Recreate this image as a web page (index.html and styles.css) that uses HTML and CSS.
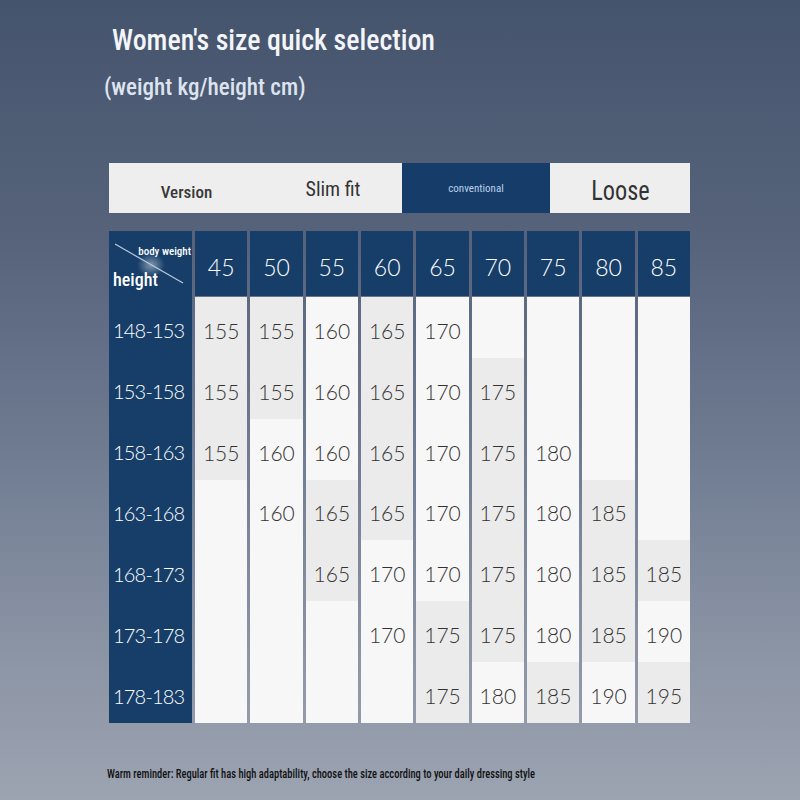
FILE: index.html
```html
<!DOCTYPE html>
<html lang="en">
<head>
<meta charset="utf-8">
<title>Women's size quick selection</title>
<link rel="stylesheet" href="styles.css">
</head>
<body>
<div class="page">
  <h1 class="title">Women's size quick selection</h1>
  <p class="subtitle">(weight kg/height cm)</p>

  <div class="version">
    <div class="v-cell v-label">Version</div>
    <div class="v-cell v-slim">Slim fit</div>
    <div class="v-cell v-conv">conventional</div>
    <div class="v-cell v-loose"><span class="loose-text">Loose</span></div>
  </div>

  <div class="chart">
    <div class="corner">
      <svg class="corner-art" width="83" height="66" viewBox="0 0 83 66">
        <defs>
          <radialGradient id="glare" cx="0.5" cy="0.5" r="0.5">
            <stop offset="0" stop-color="#ffffff" stop-opacity="0.45"/>
            <stop offset="1" stop-color="#ffffff" stop-opacity="0"/>
          </radialGradient>
        </defs>
        <ellipse cx="42" cy="34" rx="14" ry="12" fill="url(#glare)"/>
        <line x1="6" y1="13" x2="74" y2="52" stroke="#b9c9de" stroke-width="1.2"/>
      </svg>
      <span class="corner-top">body weight</span>
      <span class="corner-bottom">height</span>
    </div>
    <div class="head">45</div><div class="head">50</div><div class="head">55</div><div class="head">60</div><div class="head">65</div><div class="head">70</div><div class="head">75</div><div class="head">80</div><div class="head">85</div>

    <div class="label">148-153</div>
    <div class="cell alt">155</div><div class="cell alt">155</div><div class="cell">160</div><div class="cell alt">165</div><div class="cell">170</div><div class="cell"></div><div class="cell"></div><div class="cell"></div><div class="cell"></div>

    <div class="label">153-158</div>
    <div class="cell alt">155</div><div class="cell alt">155</div><div class="cell">160</div><div class="cell alt">165</div><div class="cell">170</div><div class="cell alt">175</div><div class="cell"></div><div class="cell"></div><div class="cell"></div>

    <div class="label">158-163</div>
    <div class="cell alt">155</div><div class="cell">160</div><div class="cell">160</div><div class="cell alt">165</div><div class="cell">170</div><div class="cell alt">175</div><div class="cell">180</div><div class="cell"></div><div class="cell"></div>

    <div class="label">163-168</div>
    <div class="cell"></div><div class="cell">160</div><div class="cell alt">165</div><div class="cell alt">165</div><div class="cell">170</div><div class="cell alt">175</div><div class="cell">180</div><div class="cell alt">185</div><div class="cell"></div>

    <div class="label">168-173</div>
    <div class="cell"></div><div class="cell"></div><div class="cell alt">165</div><div class="cell">170</div><div class="cell">170</div><div class="cell alt">175</div><div class="cell">180</div><div class="cell alt">185</div><div class="cell alt">185</div>

    <div class="label">173-178</div>
    <div class="cell"></div><div class="cell"></div><div class="cell"></div><div class="cell">170</div><div class="cell alt">175</div><div class="cell alt">175</div><div class="cell">180</div><div class="cell alt">185</div><div class="cell">190</div>

    <div class="label">178-183</div>
    <div class="cell"></div><div class="cell"></div><div class="cell"></div><div class="cell"></div><div class="cell alt">175</div><div class="cell">180</div><div class="cell alt">185</div><div class="cell">190</div><div class="cell alt">195</div>
  </div>

  <p class="note">Warm reminder: Regular fit has high adaptability, choose the size according to your daily dressing style</p>
</div>
</body>
</html>
```

FILE: styles.css
```css
html, body {
  margin: 0;
  padding: 0;
}

body {
  width: 800px;
  height: 800px;
  overflow: hidden;
  background: linear-gradient(180deg, #45546d 0%, #56637b 30%, #6d7a90 55%, #8a93a4 80%, #9ca3b1 100%);
}

.page {
  display: flex;
  flex-direction: column;
  align-items: flex-start;
}

.title {
  margin: 20px 0 0 112px;
  font-family: "Roboto Condensed", "Roboto", sans-serif;
  font-weight: 500;
  font-size: 30px;
  line-height: 40px;
  color: #f3f5f8;
  white-space: nowrap;
  transform: scaleX(0.93);
  transform-origin: left center;
}

.subtitle {
  margin: 12px 0 0 104px;
  font-family: "Roboto Condensed", "Roboto", sans-serif;
  font-weight: 500;
  font-size: 24px;
  line-height: 30px;
  color: #dde4ef;
  white-space: nowrap;
  transform: scaleX(0.96);
  transform-origin: left center;
}

.version {
  margin: 61px 0 0 109px;
  width: 581px;
  height: 50px;
  display: grid;
  grid-template-columns: 155px 138px 148px 140px;
  font-family: "Roboto Condensed", "Roboto", sans-serif;
}

.v-cell {
  display: flex;
  align-items: center;
  justify-content: center;
  background: #eeeeee;
  color: #333333;
  padding-top: 4px;
  box-sizing: border-box;
}

.v-label { font-size: 17px; font-weight: 500; padding-top: 8px; color: #383838; }
.v-slim { font-size: 20px; font-weight: 400; padding-top: 2px; }
.v-conv { background: #163d69; color: #bcd0ea; font-size: 11px; padding-top: 0; }
.v-loose {
  font-size: 27px;
  font-weight: 400;
  padding-top: 6px;
}

.loose-text {
  display: inline-block;
  transform: scaleX(0.9);
}

.chart {
  margin: 18px 0 0 109px;
  width: 581px;
  height: 492px;
  display: grid;
  grid-template-columns: 83px repeat(9, 1fr);
  grid-template-rows: 66px repeat(7, 1fr);
  column-gap: 3px;
  font-family: "Lato", "Open Sans", sans-serif;
}

.corner {
  position: relative;
  background: #163e69;
  color: #ffffff;
  font-family: "Roboto Condensed", "Roboto", sans-serif;
  display: flex;
  flex-direction: column;
  justify-content: space-between;
  padding: 14px 0 7px 4px;
  box-sizing: border-box;
}

.corner-art {
  position: absolute;
  left: 0;
  top: 0;
}

.corner-top {
  position: relative;
  align-self: flex-end;
  font-size: 11px;
  font-weight: 500;
  line-height: 14px;
  padding-right: 1px;
}

.corner-bottom {
  position: relative;
  font-size: 18px;
  font-weight: 500;
  line-height: 20px;
}

.head {
  background: #163e69;
  color: #ffffff;
  display: flex;
  align-items: center;
  justify-content: center;
  font-weight: 300;
  font-size: 23px;
  padding-top: 6px;
  border-bottom: 1px solid #6a7489;
}

.label {
  background: #163e69;
  color: #ffffff;
  display: flex;
  align-items: center;
  padding: 6px 0 0 4px;
  font-weight: 300;
  font-size: 20px;
  letter-spacing: -0.8px;
  white-space: nowrap;
}

.cell {
  background: #f7f7f7;
  color: #333333;
  display: flex;
  align-items: center;
  justify-content: center;
  padding-top: 6px;
  font-weight: 300;
  font-size: 21px;
}

.cell.alt {
  background: #ebebeb;
}

.note {
  margin: 43px 0 0 107px;
  font-family: "Roboto Condensed", "Roboto", sans-serif;
  font-weight: 500;
  font-size: 12px;
  line-height: 16px;
  color: #111111;
  white-space: nowrap;
  transform: scaleX(0.875);
  transform-origin: left center;
}
```
